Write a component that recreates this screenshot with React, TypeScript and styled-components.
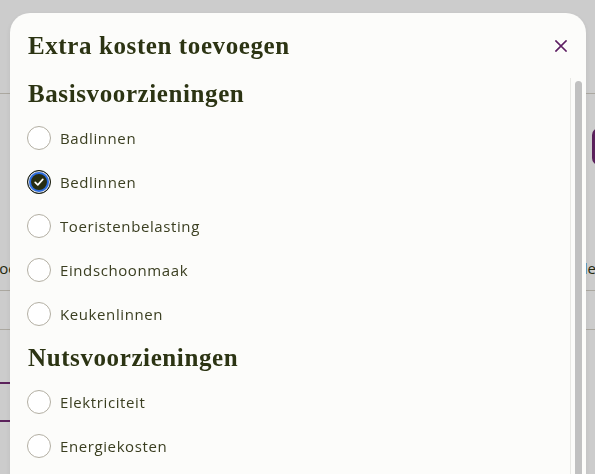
import React, { useState } from "react";
import styled, { createGlobalStyle } from "styled-components";

const GlobalStyle = createGlobalStyle`
  html, body { margin: 0; padding: 0; overflow: hidden; }
  body { background: #ffffff; font-family: "Open Sans", "Liberation Sans", sans-serif; }
  * { box-sizing: border-box; }
`;

const Page = styled.div`
  width: 595px;
  height: 474px;
  background: #ffffff;
  display: flex;
  flex-direction: column;
  overflow: hidden;
`;

const TopBar = styled.div`
  height: 94px;
  flex: none;
  border-bottom: 1px solid #d6d2c8;
`;

const Toolbar = styled.div`
  display: flex;
  justify-content: flex-end;
  padding-top: 34px;
  height: 151px;
  flex: none;
`;

const PrimaryButton = styled.div`
  width: 60px;
  height: 37px;
  margin-right: -57px;
  border-radius: 7px;
  background: #712872;
`;

const TableHead = styled.div`
  display: flex;
  justify-content: space-between;
  align-items: center;
  height: 46px;
  flex: none;
  border-bottom: 1px solid #d6d2c8;
  font-size: 15px;
  color: #2c3413;
`;

const HeadCell = styled.span<{ $shift: number }>`
  margin-left: ${(p) => (p.$shift < 0 ? `${p.$shift}px` : 0)};
  margin-right: ${(p) => (p.$shift > 0 ? `${-p.$shift}px` : 0)};
  white-space: nowrap;
`;

const TableRow = styled.div`
  height: 39px;
  flex: none;
  border-bottom: 1px solid #d6d2c8;
`;

const SelectedRow = styled.div`
  margin-top: 52px;
  width: 320px;
  height: 40px;
  flex: none;
  border-top: 2px solid #742c74;
  border-bottom: 2px solid #742c74;
`;

const Backdrop = styled.div`
  position: fixed;
  inset: 0;
  background: rgba(0, 0, 0, 0.2);
`;

const Dialog = styled.div`
  position: fixed;
  left: 10px;
  top: 13px;
  width: 576px;
  height: 610px;
  background: #fcfcfa;
  border-radius: 20px 20px 0 0;
  box-shadow: 0 2px 6px rgba(0, 0, 0, 0.08);
  display: flex;
  flex-direction: column;
  overflow: hidden;
`;

const Header = styled.div`
  height: 65px;
  flex: none;
  display: flex;
  align-items: center;
  justify-content: space-between;
  padding: 0 19px 0 18px;
`;

const Title = styled.h2`
  margin: 0;
  font-family: "Liberation Serif", "Times New Roman", serif;
  font-weight: 700;
  font-size: 25px;
  line-height: 28px;
  letter-spacing: 0.6px;
  color: #2c3413;
`;

const CloseButton = styled.button`
  width: 12px;
  height: 12px;
  padding: 0;
  border: none;
  background: none;
  display: flex;
  cursor: pointer;
`;

const Body = styled.div`
  flex: 1;
  min-height: 0;
  display: flex;
`;

const Content = styled.div`
  flex: 1;
  min-width: 0;
  overflow: hidden;
  padding: 2px 0 0 17px;
`;

const ScrollTrack = styled.div`
  width: 16px;
  flex: none;
  display: flex;
  padding: 3px 4px 0 4px;
  border-left: 1px solid #e8e8e4;
  background: #fcfcfa;
`;

const ScrollThumb = styled.div`
  flex: 1;
  height: 460px;
  border-radius: 4px;
  background: #c1c1c1;
`;

const Section = styled.section`
  & + & {
    margin-top: 8px;
  }
`;

const SectionTitle = styled.h3`
  margin: 0 0 8px 1px;
  font-family: "Liberation Serif", "Times New Roman", serif;
  font-weight: 700;
  font-size: 25px;
  line-height: 28px;
  letter-spacing: 0.6px;
  color: #2c3413;
`;

const Option = styled.label`
  height: 44px;
  display: flex;
  align-items: center;
  gap: 9px;
  cursor: pointer;
  font-size: 15px;
  letter-spacing: 0.6px;
  color: #3a3e20;
`;

const Circle = styled.span<{ $checked: boolean }>`
  width: 24px;
  height: 24px;
  flex: none;
  border-radius: 50%;
  display: flex;
  align-items: center;
  justify-content: center;
  border: 1px solid ${(p) => (p.$checked ? "#1c1f10" : "#b3afa3")};
  background: ${(p) => (p.$checked ? "#272d12" : "#ffffff")};
  box-shadow: ${(p) =>
    p.$checked ? "inset 0 0 0 1px #d8d8d8, inset 0 0 0 3px #2b6ce0" : "none"};
`;

const HiddenInput = styled.input`
  position: absolute;
  opacity: 0;
  width: 0;
  height: 0;
`;

const sections = [
  {
    title: "Basisvoorzieningen",
    items: ["Badlinnen", "Bedlinnen", "Toeristenbelasting", "Eindschoonmaak", "Keukenlinnen"],
  },
  {
    title: "Nutsvoorzieningen",
    items: ["Elektriciteit", "Energiekosten", "Gas", "Water"],
  },
];

export default function App() {
  const [checked, setChecked] = useState<Record<string, boolean>>({ Bedlinnen: true });

  return (
    <>
      <GlobalStyle />
      <Page>
        <TopBar />
        <Toolbar>
          <PrimaryButton />
        </Toolbar>
        <TableHead>
          <HeadCell $shift={-9}>Toevoegen</HeadCell>
          <HeadCell $shift={8}>Alles</HeadCell>
        </TableHead>
        <TableRow />
        <SelectedRow />
      </Page>
      <Backdrop />
      <Dialog role="dialog" aria-label="Extra kosten toevoegen">
        <Header>
          <Title>Extra kosten toevoegen</Title>
          <CloseButton aria-label="Sluiten">
            <svg width="12" height="12" viewBox="0 0 12 12">
              <path d="M1 1 L11 11 M11 1 L1 11" stroke="#5e1f63" strokeWidth="1.7" strokeLinecap="square" />
            </svg>
          </CloseButton>
        </Header>
        <Body>
          <Content>
            {sections.map((s) => (
              <Section key={s.title}>
                <SectionTitle>{s.title}</SectionTitle>
                {s.items.map((item) => {
                  const on = !!checked[item];
                  return (
                    <Option key={item}>
                      <HiddenInput
                        type="checkbox"
                        checked={on}
                        onChange={() => setChecked((c) => ({ ...c, [item]: !on }))}
                      />
                      <Circle $checked={on}>
                        {on && (
                          <svg width="14" height="14" viewBox="0 0 14 14">
                            <path d="M3.2 7.4 L5.8 9.8 L10.8 4.4" fill="none" stroke="#ffffff" strokeWidth="1.7" strokeLinecap="round" strokeLinejoin="round" />
                          </svg>
                        )}
                      </Circle>
                      {item}
                    </Option>
                  );
                })}
              </Section>
            ))}
          </Content>
          <ScrollTrack aria-hidden="true">
            <ScrollThumb />
          </ScrollTrack>
        </Body>
      </Dialog>
    </>
  );
}
